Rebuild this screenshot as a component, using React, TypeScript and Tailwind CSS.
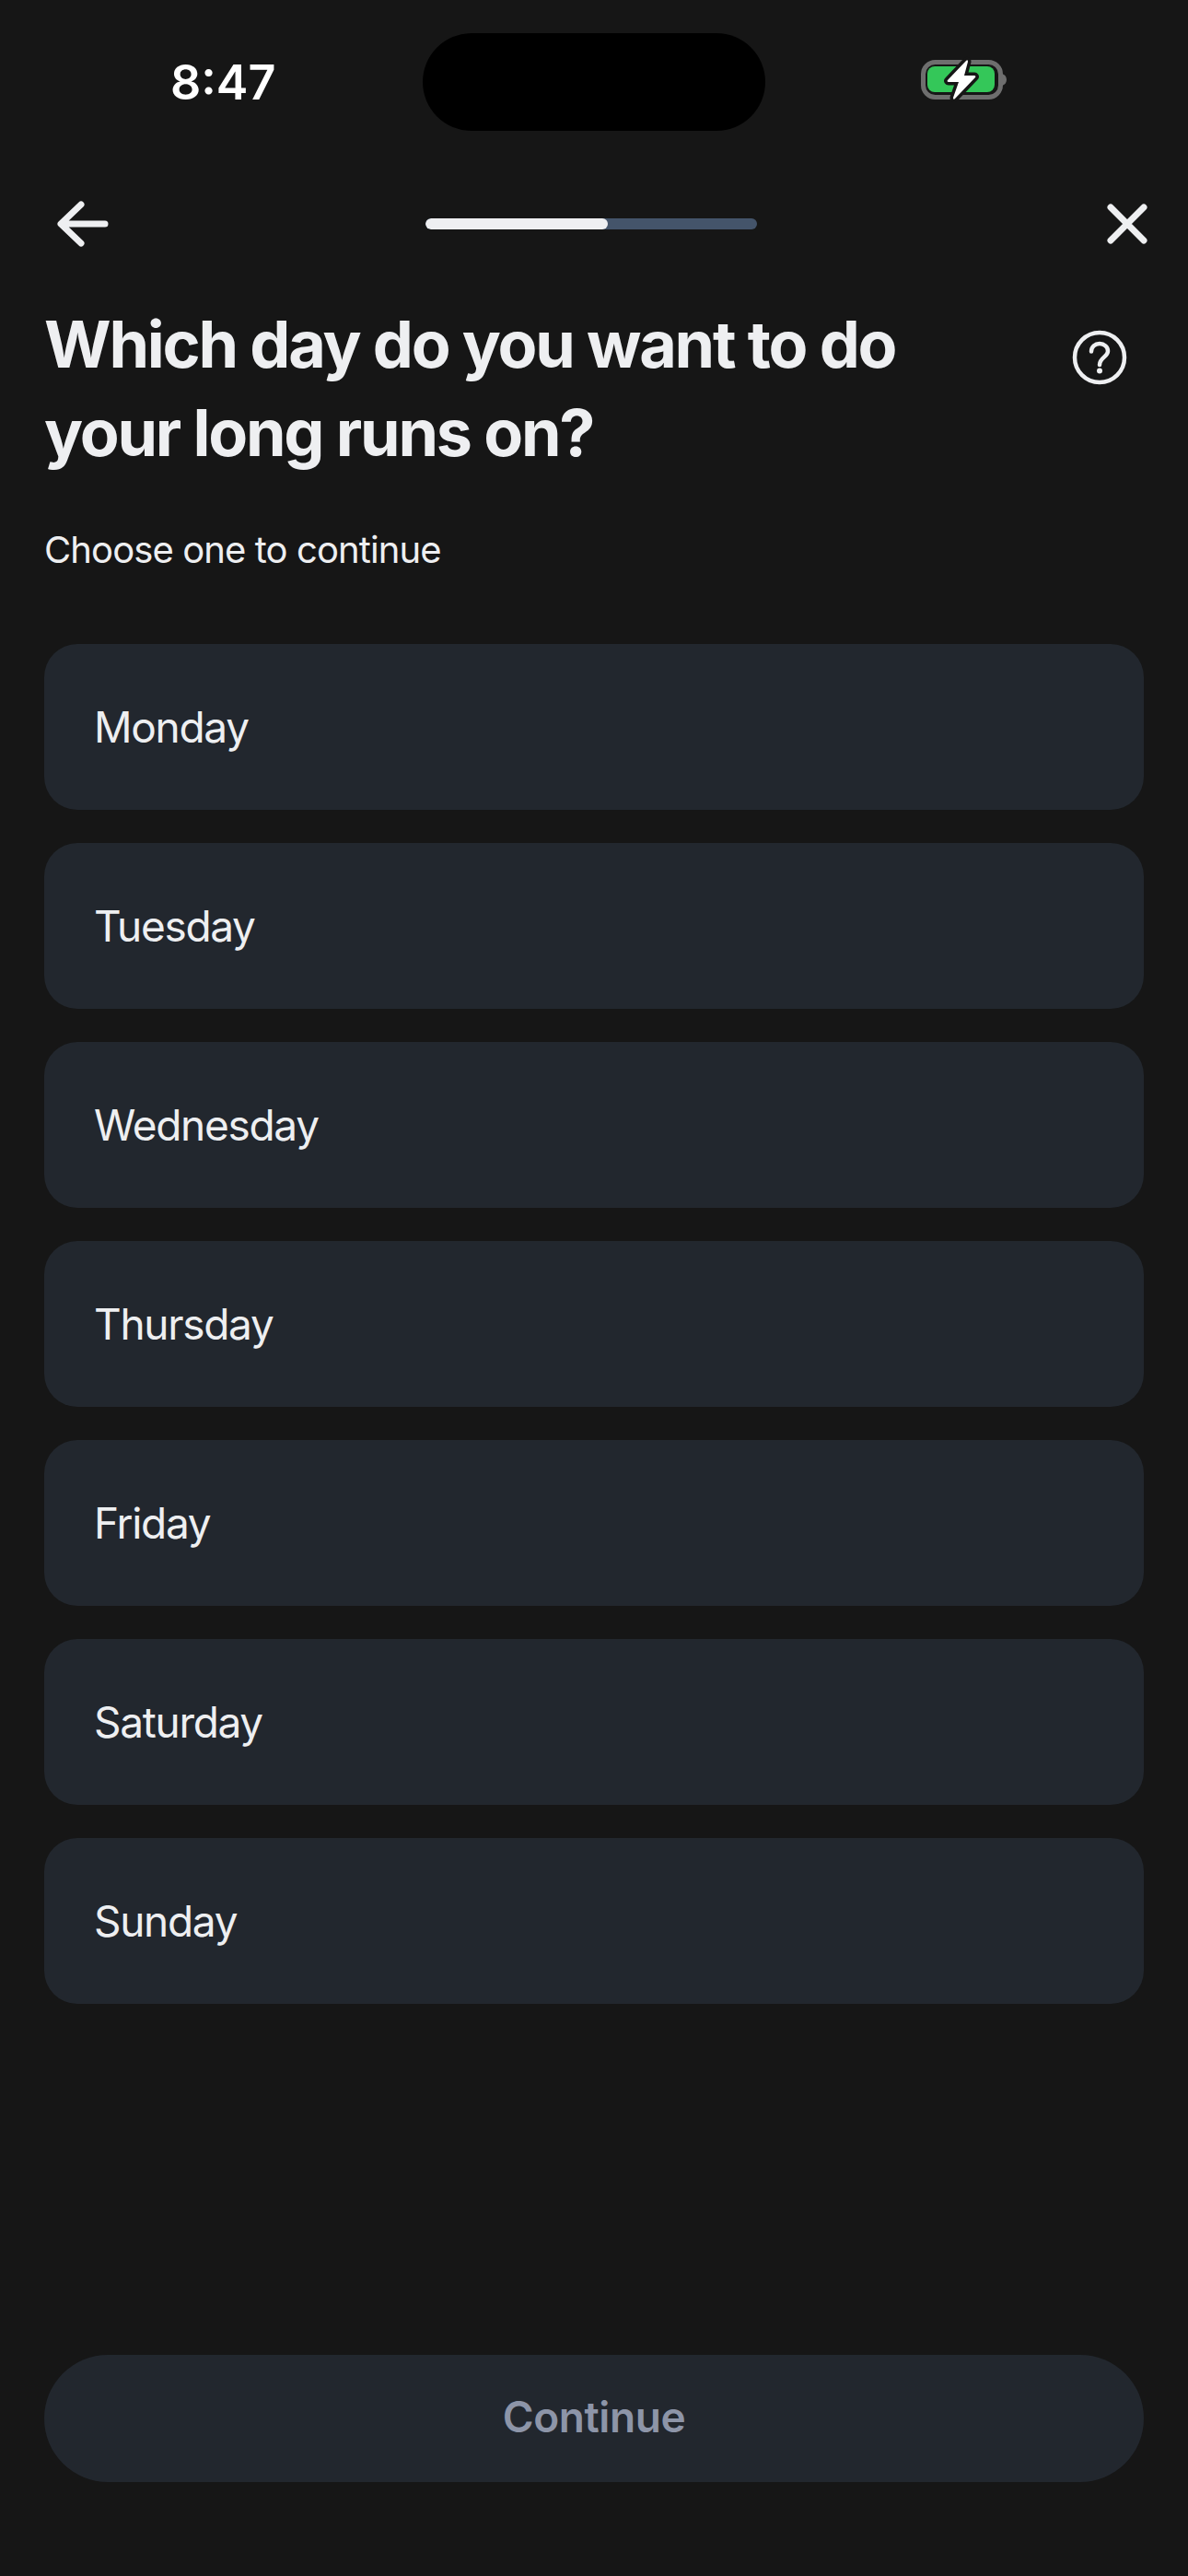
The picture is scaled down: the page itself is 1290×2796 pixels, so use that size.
const days = ["Monday", "Tuesday", "Wednesday", "Thursday", "Friday", "Saturday", "Sunday"];

const BatteryIcon = () => (
  <svg width="96" height="50" viewBox="0 0 96 50" fill="none">
    <rect x="2.500" y="6.500" width="84" height="38" rx="13" stroke="#6e6e6e" strokeWidth="5" />
    <rect x="7" y="11" width="73" height="28" rx="8" fill="#34c759" />
    <path d="M88 19c3 1 5 3 5 6.500s-2 5.500-5 6.500z" fill="#6e6e6e" />
    <path
      d="M49 5 29 26c-1 1 0 2 1 2h11l-6 17c0 2 1 2 2 1l22-23c1-1 0-2-1-2H47l4-15c0-2-1-2-2-1z"
      fill="#fff"
      stroke="#161616"
      strokeWidth="7"
      strokeLinejoin="round"
      paintOrder="stroke"
    />
  </svg>
);

const BackIcon = () => (
  <svg width="56" height="50" viewBox="0 0 56 50" fill="none" stroke="#eeeff1" strokeWidth="7" strokeLinecap="round" strokeLinejoin="round">
    <path d="M52 25H5M26 4 4 25l22 21" />
  </svg>
);

const CloseIcon = () => (
  <svg width="44" height="44" viewBox="0 0 44 44" fill="none" stroke="#eeeff1" strokeWidth="7" strokeLinecap="round">
    <path d="M4 4l36 36M40 4 4 40" />
  </svg>
);

const HelpIcon = () => (
  <svg width="60" height="60" viewBox="0 0 60 60" fill="none" stroke="#eeeff1" strokeLinecap="round">
    <circle cx="30" cy="30" r="27" strokeWidth="4.500" />
    <path d="M21 23.500c0-5 4-8.500 9-8.500s9 3.500 9 8c0 6.500-9 7-9 15" strokeWidth="4.500" />
    <circle cx="30" cy="44.500" r="3" fill="#eeeff1" stroke="none" />
  </svg>
);

export default function App() {
  return (
    <div className="h-[2796px] w-[1290px] flex flex-col bg-[#161616] font-['Inter',sans-serif] text-[#eeeff1]">
      <div className="grid grid-cols-[1fr_372px_1fr] items-start pt-9">
        <div className="pl-[185px] pt-[22px] text-[52px] leading-[64px] font-semibold text-white">8:47</div>
        <div className="h-[106px] bg-black rounded-[53px]" />
        <div className="pl-[169px] pt-[25px]">
          <BatteryIcon />
        </div>
      </div>

      <div className="mt-[76px] pr-[6px] grid grid-cols-[1fr_360px_1fr] items-center h-[50px]">
        <div className="pl-[62px]">
          <BackIcon />
        </div>
        <div className="flex h-3 rounded-full overflow-hidden bg-[#44546a]">
          <div className="w-[198px] rounded-full bg-[#eeeff1]" />
        </div>
        <div className="flex justify-end pr-[38px]">
          <CloseIcon />
        </div>
      </div>

      <div className="mt-[58px] pl-[48px] pr-[66px] flex justify-between items-start">
        <h1 className="text-[70px] leading-[96px] font-bold tracking-[-2.2px] w-[1000px]">
          Which day do you want to do your long runs on?
        </h1>
        <div className="mt-[32px] shrink-0">
          <HelpIcon />
        </div>
      </div>

      <p className="mt-[51px] pl-[48px] text-[40px] leading-[56px] tracking-[-0.9px]">Choose one to continue</p>

      <div className="mt-[74px] mx-[48px] flex flex-col gap-[36px]">
        {days.map((day) => (
          <div key={day} className="h-[180px] rounded-[36px] bg-[#22272e] pl-[54px] flex items-center text-[46px] tracking-[-1.3px]">
            {day}
          </div>
        ))}
      </div>

      <div className="mt-auto mb-[102px] mx-[48px] h-[138px] pb-[4px] rounded-full bg-[#22272e] flex items-center justify-center text-[46px] font-semibold tracking-[-0.4px] text-[#8d95a8]">
        Continue
      </div>
    </div>
  );
}
